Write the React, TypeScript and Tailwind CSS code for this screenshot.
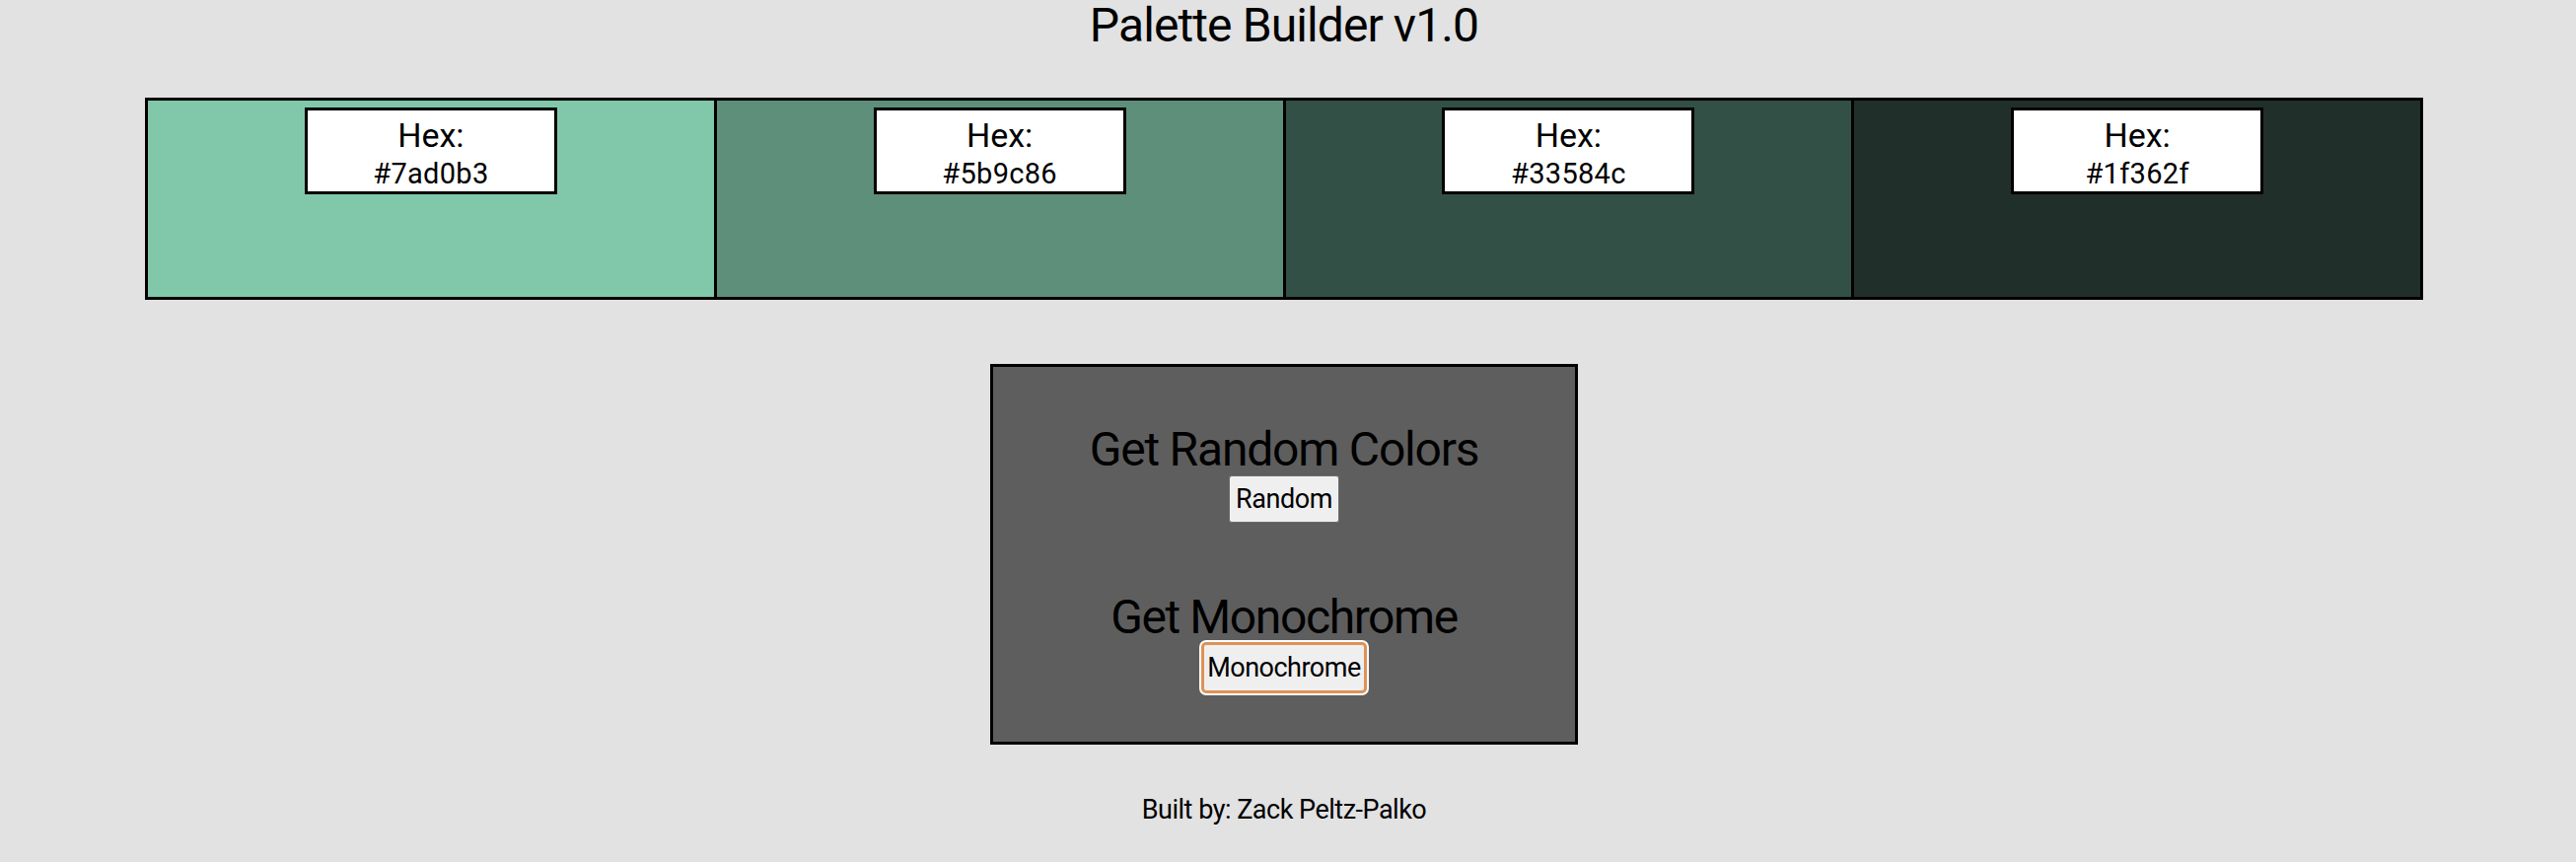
import React from "react";

const swatches = [
  { bg: "bg-[#81c8ab]", hex: "#7ad0b3" },
  { bg: "bg-[#5e8f7b]", hex: "#5b9c86" },
  { bg: "bg-[#325046]", hex: "#33584c" },
  { bg: "bg-[#212f2b]", hex: "#1f362f" },
];

export default function App() {
  return (
    <div
      className="min-h-screen w-full bg-[#e2e2e2] text-black"
      style={{ fontFamily: "Roboto, 'Liberation Sans', sans-serif" }}
    >
      <div className="w-[2604px] flex flex-col items-center">
        <h1 className="pt-[2px] text-[48px] leading-none font-normal text-center tracking-[-0.9px]">
          Palette Builder v1.0
        </h1>

        <div className="mt-[49px] w-[2310px] h-[205px] flex border-[3px] border-black">
          {swatches.map((s, i) => (
            <div
              key={s.hex}
              className={`flex-1 flex justify-center ${s.bg} ${i > 0 ? "border-l-[3px] border-black" : ""}`}
            >
              <div className="mt-[7px] w-[256px] h-[88px] bg-white border-[3px] border-black flex flex-col items-center">
                <div className="pt-[8px] text-[34px] leading-none">Hex:</div>
                <div className="mt-[8px] text-[29px] leading-none tracking-[0.3px]">{s.hex}</div>
              </div>
            </div>
          ))}
        </div>

        <div className="mt-[65px] w-[596px] h-[386px] bg-[#5e5e5e] border-[3px] border-black flex flex-col items-center">
          <h2 className="pt-[60px] text-[48px] leading-none font-normal tracking-[-1.2px]">Get Random Colors</h2>
          <button className="mt-[2px] w-[112px] h-[48px] bg-[#efefef] border border-[#6b6b6b] rounded-[3px] text-[27px] leading-none tracking-[-0.4px] flex items-center justify-center">
            Random
          </button>
          <h2 className="mt-[72px] text-[48px] leading-none font-normal tracking-[-1.4px]">Get Monochrome</h2>
          <button className="mt-[1px] w-[168px] h-[52px] bg-[#efefef] border-[3px] border-[#de9257] rounded-[5px] ring-2 ring-white text-[27px] leading-none tracking-[-0.5px] flex items-center justify-center">
            Monochrome
          </button>
        </div>

        <p className="mt-[53px] text-[27px] leading-none tracking-[-0.5px]">Built by: Zack Peltz-Palko</p>
      </div>
    </div>
  );
}
